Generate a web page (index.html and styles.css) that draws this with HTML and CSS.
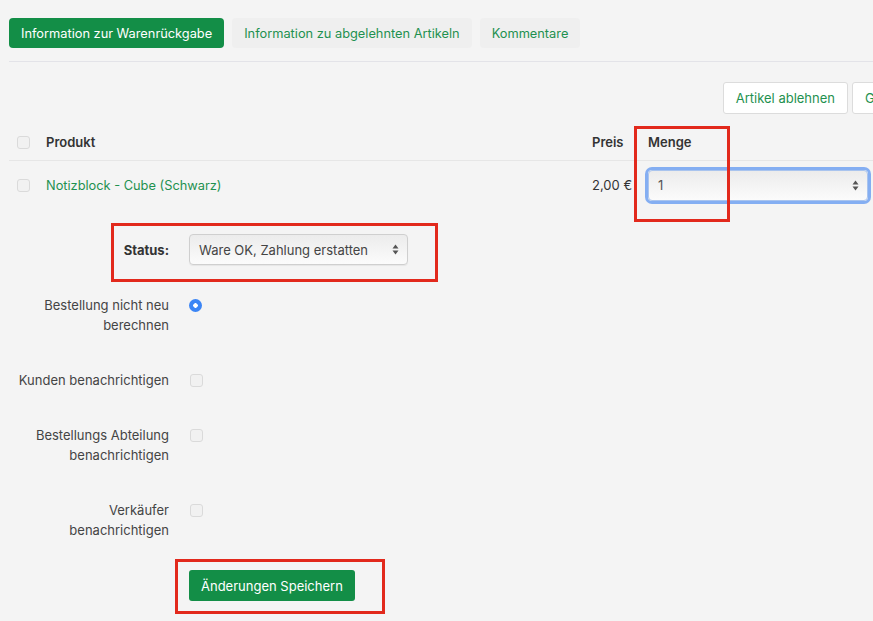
FILE: index.html
```html
<!DOCTYPE html>
<html lang="de">
<head>
<meta charset="utf-8">
<title>Warenrückgabe</title>
<link rel="stylesheet" href="styles.css">
</head>
<body>
<div class="page">
  <nav class="tabs">
    <a class="tab active">Information zur Warenrückgabe</a>
    <a class="tab">Information zu abgelehnten Artikeln</a>
    <a class="tab">Kommentare</a>
  </nav>

  <div class="actions">
    <button class="btn-outline">Artikel ablehnen</button>
    <button class="btn-outline wide">Genehmigen</button>
  </div>

  <div class="table">
    <div class="row head">
      <div class="cell check"><span class="checkbox"></span></div>
      <div class="cell">Produkt</div>
      <div class="cell">Preis</div>
      <div class="cell">Menge</div>
    </div>
    <div class="row body">
      <div class="cell check"><span class="checkbox"></span></div>
      <div class="cell link">Notizblock - Cube (Schwarz)</div>
      <div class="cell">2,00 €</div>
      <div class="cell">
        <div class="select focus"><span>1</span><svg class="arrows" width="7" height="11" viewBox="0 0 7 11"><path d="M3.5 0.5 L6.5 4.5 L0.5 4.5 Z M3.5 10.5 L6.5 6.5 L0.5 6.5 Z" fill="#555"/></svg></div>
      </div>
    </div>
  </div>

  <div class="form">
    <div class="frow status">
      <div class="label bold">Status:</div>
      <div class="control">
        <div class="select status-select"><span>Ware OK, Zahlung erstatten</span><svg class="arrows" width="7" height="11" viewBox="0 0 7 11"><path d="M3.5 0.5 L6.5 4.5 L0.5 4.5 Z M3.5 10.5 L6.5 6.5 L0.5 6.5 Z" fill="#555"/></svg></div>
      </div>
    </div>
    <div class="frow">
      <div class="label">Bestellung nicht neu<br>berechnen</div>
      <div class="control"><span class="radio"></span></div>
    </div>
    <div class="frow spaced">
      <div class="label">Kunden benachrichtigen</div>
      <div class="control"><span class="checkbox"></span></div>
    </div>
    <div class="frow spaced">
      <div class="label">Bestellungs Abteilung<br>benachrichtigen</div>
      <div class="control"><span class="checkbox"></span></div>
    </div>
    <div class="frow spaced">
      <div class="label">Verkäufer<br>benachrichtigen</div>
      <div class="control"><span class="checkbox"></span></div>
    </div>
    <div class="frow submit">
      <div class="label"></div>
      <div class="control"><button class="btn-primary">Änderungen Speichern</button></div>
    </div>
  </div>
</div>

<div class="mark mark-menge"></div>
<div class="mark mark-status"></div>
<div class="mark mark-save"></div>
</body>
</html>
```

FILE: styles.css
```css
html, body {
  margin: 0;
  padding: 0;
  background: #f4f4f4;
  overflow: hidden;
}
body {
  font-family: Inter, "Noto Sans", sans-serif;
  font-size: 13px;
  color: #333;
  width: 873px;
  height: 621px;
  position: relative;
}
.page {
  padding-left: 9px;
}
.tabs {
  display: flex;
  gap: 8px;
  padding-top: 18px;
  padding-bottom: 13px;
  border-bottom: 1px solid #e3e3e8;
}
.tab {
  height: 30px;
  line-height: 31px;
  padding: 0 12px;
  border-radius: 4px;
  background: #efefef;
  color: #1f9150;
  font-size: 12.8px;
  white-space: nowrap;
}
.tab.active {
  background: #138e47;
  color: #fff;
}
.actions {
  display: flex;
  justify-content: flex-end;
  gap: 4px;
  margin-top: 20px;
  margin-right: -79px;
}
.btn-outline {
  height: 32px;
  padding: 0 12px;
  border: 1px solid #dcdcdc;
  border-radius: 3px;
  background: #fff;
  color: #1f9150;
  font-family: inherit;
  font-size: 13px;
  white-space: nowrap;
}
.btn-outline.wide {
  width: 100px;
  text-align: left;
}
.table {
  margin-top: 10px;
}
.row {
  display: grid;
  grid-template-columns: 37px 1fr 56px 225px;
  align-items: center;
}
.row.head {
  height: 36px;
  border-bottom: 1px solid #e6e6e6;
  font-weight: 600;
}
.row.body {
  height: 48px;
}
.cell.check {
  padding-left: 8px;
}
.link {
  color: #1f9150;
  font-size: 12.8px;
}
.checkbox {
  display: block;
  width: 11px;
  height: 11px;
  border: 1px solid #dadada;
  border-radius: 3px;
  background: #f1f1f1;
}
.select {
  display: flex;
  align-items: center;
  justify-content: space-between;
  box-sizing: border-box;
  height: 31px;
  padding: 0 8px 0 9px;
  border: 1px solid #cfcfcf;
  border-radius: 4px;
  background: linear-gradient(#ececec, #fbfbfb);
  box-shadow: 0 1px 1px rgba(0,0,0,0.06);
  color: #444;
}
.select.focus {
  width: 220px;
  height: 31px;
  border-color: #a9c4ee;
  box-shadow: 0 0 0 3px #84aef2;
  border-radius: 4px;
  color: #555;
}
.form {
  margin-top: 25px;
  display: flex;
  flex-direction: column;
  gap: 30px;
}
.frow {
  display: grid;
  grid-template-columns: 160px 1fr;
  column-gap: 20px;
  align-items: start;
  line-height: 20px;
  color: #444;
}
.frow.status {
  align-items: center;
}
.frow.spaced {
  margin-top: 5px;
}
.label {
  text-align: right;
}
.label.bold {
  font-weight: 700;
  color: #333;
}
.control {
  display: flex;
  align-items: center;
  min-height: 20px;
}
.status-select {
  width: 219px;
}
.radio {
  display: block;
  width: 13px;
  height: 13px;
  border-radius: 50%;
  background: radial-gradient(circle, #fff 0 2px, #3b85f5 2.5px);
}
.control .checkbox {
  margin-left: 1px;
}
.btn-primary {
  height: 31px;
  padding: 0 12px;
  border: none;
  border-radius: 3px;
  background: #138e47;
  color: #fff;
  font-family: inherit;
  font-size: 13px;
}
.mark {
  position: absolute;
  border: 3px solid #e2291c;
  box-sizing: border-box;
}
.mark-menge { left: 634px; top: 126px; width: 96px; height: 96px; }
.mark-status { left: 111px; top: 223px; width: 327px; height: 59px; }
.mark-save { left: 175px; top: 559px; width: 210px; height: 55px; }
```
